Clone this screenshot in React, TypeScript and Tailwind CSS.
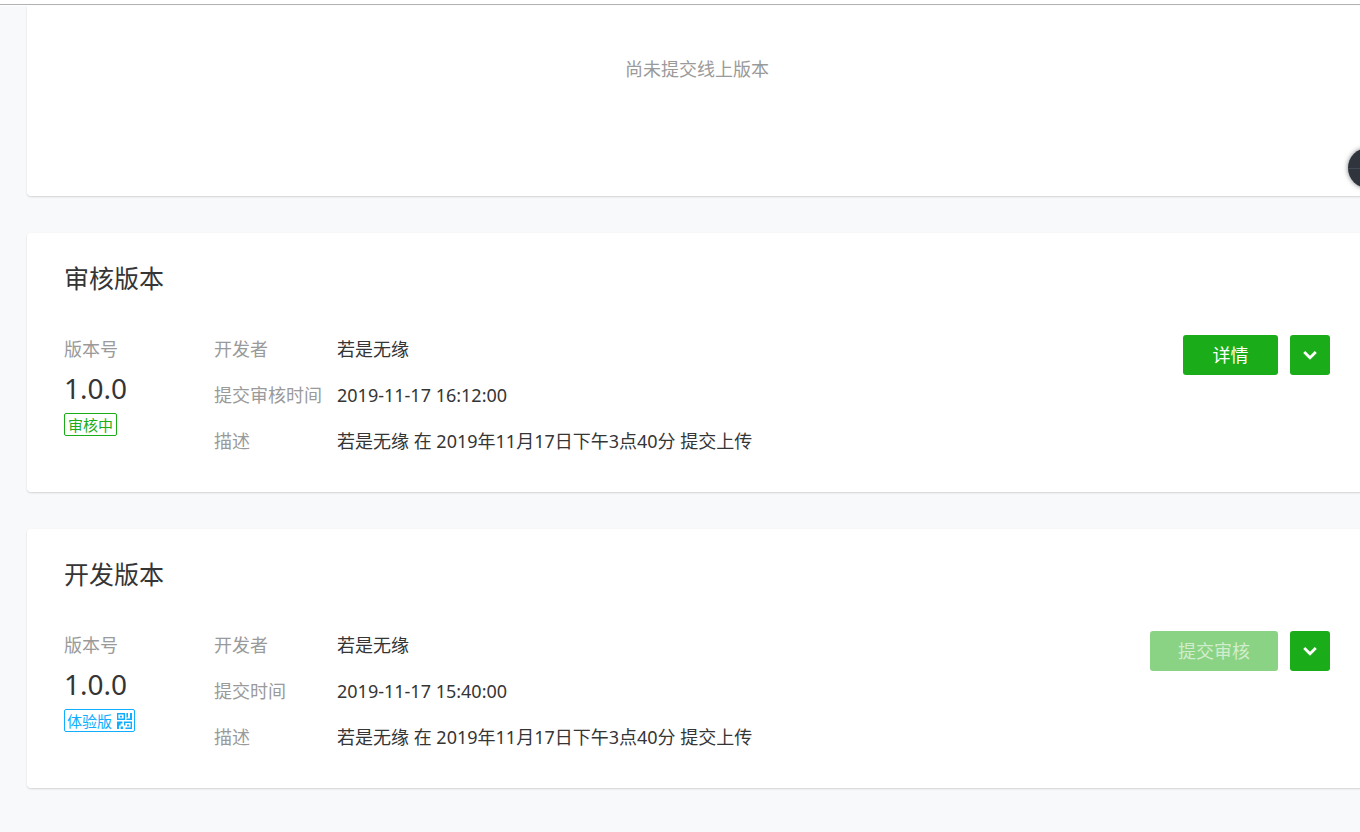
import React from 'react';
import clsx from 'clsx';

interface VersionInfo {
  id: string;
  title: string;
  version: string;
  tag: string;
  tagType: 'green' | 'blue';
  timeLabel: string;
  time: string;
  developer: string;
  desc: string;
  action: string;
  disabled: boolean;
}

const versions: VersionInfo[] = [
  {
    id: 'audit',
    title: '审核版本',
    version: '1.0.0',
    tag: '审核中',
    tagType: 'green',
    timeLabel: '提交审核时间',
    time: '2019-11-17 16:12:00',
    developer: '若是无缘',
    desc: '若是无缘 在 2019年11月17日下午3点40分 提交上传',
    action: '详情',
    disabled: false
  },
  {
    id: 'develop',
    title: '开发版本',
    version: '1.0.0',
    tag: '体验版',
    tagType: 'blue',
    timeLabel: '提交时间',
    time: '2019-11-17 15:40:00',
    developer: '若是无缘',
    desc: '若是无缘 在 2019年11月17日下午3点40分 提交上传',
    action: '提交审核',
    disabled: true
  }
];

function QrIcon() {
  return (
    <svg viewBox="0 0 16 16" className="w-4 h-4" fill="currentColor" aria-hidden="true">
      <path fillRule="evenodd" d="M1 0h8v7H1zM2.4 1.4v4.2h5.2V1.4z" />
      <path d="M4 2.8h2v1.6H4z" />
      <path d="M10.4 0h1.6v4.4h-1.6zM14 0h2v7h-5.6V5.6H14z" />
      <path d="M1 8.6h5.4v1.8H4.6v2H3V16H1zM4.6 13.6h2.4V16H4.6z" />
      <path fillRule="evenodd" d="M8 8.6h8V16H9.4v-1.4h5.2V10H9.4v2.4H8z" />
      <path d="M11 11.4h2v1.8h-2z" />
    </svg>
  );
}

function ArrowIcon() {
  return (
    <svg viewBox="0 0 14 10" className="w-[14px] h-[10px]" fill="none" stroke="currentColor" strokeWidth="2.8" aria-hidden="true">
      <path d="M1.2 1.9 7 7.7l5.8-5.8" />
    </svg>
  );
}

function VersionCard({ item }: { item: VersionInfo }) {
  const rows = [
    { label: '开发者', value: item.developer },
    { label: item.timeLabel, value: item.time },
    { label: '描述', value: item.desc }
  ];

  return (
    <section className="bg-white rounded shadow-[0_1px_2px_rgba(0,0,0,0.15)] px-[37px] pt-[27px] pb-[37px]">
      <h2 className="text-[25px] leading-9 text-[#353535]">{item.title}</h2>

      <div className="flex items-start mt-[39px]">
        {/* Version number */}
        <div className="w-[150px] shrink-0">
          <p className="text-[#9a9a9a]">版本号</p>
          <p className="mt-[7px] text-[28px] leading-9 text-[#353535]">{item.version}</p>
          <span
            className={clsx(
              'mt-[7px] h-[23px] w-fit flex items-center gap-1 border rounded-xs text-[15px] leading-5',
              item.tagType === 'green' ? 'px-[3px] text-[#1aad19] border-[#1aad19]' : 'px-[2px] text-[#10aeff] border-[#10aeff]'
            )}
          >
            {item.tag}
            {item.tagType === 'blue' && <QrIcon />}
          </span>
        </div>

        {/* Details */}
        <dl className="flex-1 min-w-0 space-y-[18px]">
          {rows.map(row => (
            <div key={row.label} className="flex">
              <dt className="w-[123px] shrink-0 text-[#9a9a9a]">{row.label}</dt>
              <dd className="text-[#353535]">{row.value}</dd>
            </div>
          ))}
        </dl>

        {/* Actions */}
        <div className="flex gap-3 shrink-0">
          <button
            type="button"
            disabled={item.disabled}
            className={clsx(
              'h-10 min-w-[95px] px-7 rounded-[3px]',
              item.disabled ? 'bg-[#8bd384] text-[#d1edce]' : 'bg-[#1aad19] text-white cursor-pointer'
            )}
          >
            {item.action}
          </button>
          <button
            type="button"
            aria-label="更多"
            className="w-10 h-10 rounded-[3px] bg-[#1aad19] text-white flex items-center justify-center cursor-pointer"
          >
            <ArrowIcon />
          </button>
        </div>
      </div>
    </section>
  );
}

export default function App() {
  return (
    <div className="min-h-screen overflow-x-hidden bg-[#f8f9fb] font-['Noto_Sans','Noto_Sans_CJK_SC',sans-serif] text-lg leading-7">
      <div className="h-[6px] bg-white pt-1">
        <div className="h-px bg-[#b2b2b2]" />
      </div>

      <main className="pl-[27px] pb-11 -mr-[7px] space-y-[37px]">
        {/* Online version */}
        <section className="bg-white rounded-b shadow-[0_1px_2px_rgba(0,0,0,0.15)] pt-[49px] pb-[113px] text-center">
          <p className="text-[#9a9a9a]">尚未提交线上版本</p>
        </section>

        {versions.map(item => (
          <VersionCard key={item.id} item={item} />
        ))}
      </main>

      {/* Floating widget hanging off the right edge */}
      <div className="fixed top-[148px] -right-7 w-10 h-10 rounded-full bg-[#2f343d] shadow-[0_0_5px_rgba(0,0,0,0.5)] flex items-center">
        <div className="w-full h-px bg-[#434a53]" />
      </div>
    </div>
  );
}
